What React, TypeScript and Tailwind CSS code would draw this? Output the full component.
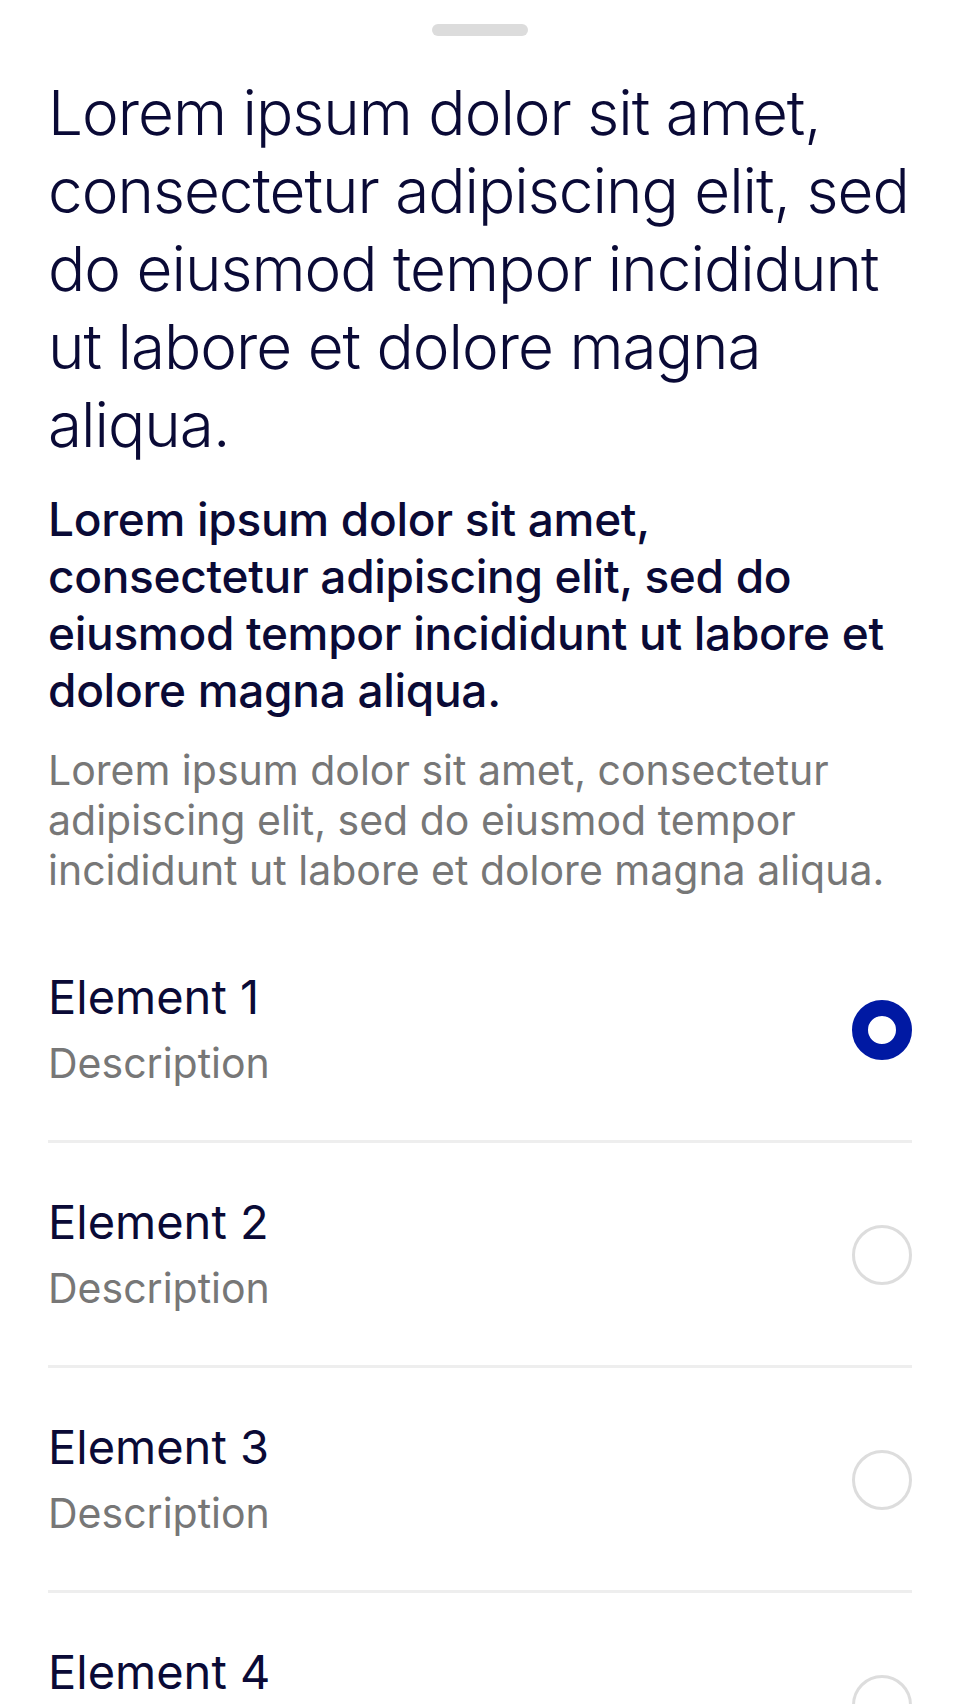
import { useState } from "react";

const items = [
  { title: "Element 1", description: "Description" },
  { title: "Element 2", description: "Description" },
  { title: "Element 3", description: "Description" },
  { title: "Element 4", description: "Description" },
];

const lorem =
  "Lorem ipsum dolor sit amet, consectetur adipiscing elit, sed do eiusmod tempor incididunt ut labore et dolore magna aliqua.";

export default function App() {
  const [selected, setSelected] = useState(0);

  return (
    <div className="min-h-screen overflow-hidden bg-white font-['Inter','Noto_Sans',sans-serif] text-[#0a0a36]">
      <div className="flex justify-center pt-[24px]">
        <div className="h-[12px] w-[96px] rounded-full bg-[#dcdcdc]" />
      </div>

      <div className="px-[48px] pt-[38px]">
        <h1 className="text-[62px] leading-[78px] font-light tracking-[-1px]">{lorem}</h1>
        <p className="mt-[27px] text-[46px] leading-[57px] font-medium tracking-[-0.3px]">{lorem}</p>
        <p className="mt-[26px] text-[41px] leading-[50px] text-[#777777]">{lorem}</p>

        <ul className="mt-[23px]">
          {items.map((item, i) => (
            <li key={item.title} className="border-b-[3px] border-[#eeeeee]">
              <button
                type="button"
                onClick={() => setSelected(i)}
                className="flex w-full items-center justify-between pt-[52px] pb-[50px] text-left"
              >
                <span className="flex flex-col gap-[12px]">
                  <span className="text-[47px] leading-[54px]">{item.title}</span>
                  <span className="text-[41px] leading-[54px] text-[#777777]">{item.description}</span>
                </span>
                {selected === i ? (
                  <span className="h-[60px] w-[60px] rounded-full border-[16px] border-[#0019a3] bg-white" />
                ) : (
                  <span className="h-[60px] w-[60px] rounded-full border-[3px] border-[#dddddd] bg-white" />
                )}
              </button>
            </li>
          ))}
        </ul>
      </div>
    </div>
  );
}
